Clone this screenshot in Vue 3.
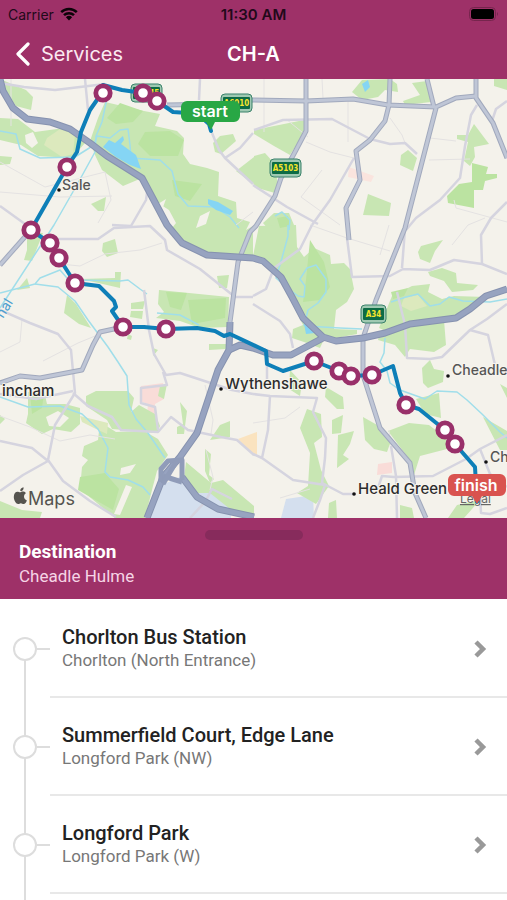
<template>
  <div class="app">
    <header class="top">
      <div class="status">
        <div class="carrier">
          <span>Carrier</span>
          <svg class="wifi" viewBox="0 0 18 14" aria-hidden="true">
            <path d="M1.2 5.2a11.2 11.2 0 0 1 15.6 0M4 8.2a7.2 7.2 0 0 1 10 0" fill="none" stroke="#0c0308" stroke-width="2.5" />
            <path d="M5.900 10.300a4.500 4.500 0 0 1 6.200 0L9 13.500z" fill="#0c0308" />
          </svg>
        </div>
        <span class="time">11:30 AM</span>
        <svg class="battery" viewBox="0 0 30 14" aria-hidden="true">
          <rect x=".5" y=".5" width="26" height="13" rx="4" fill="none" stroke="#76254d" />
          <rect x="2" y="2" width="23" height="10" rx="2.500" fill="#000" />
          <path d="M28 5v4q2-2 0-4" fill="#76254d" />
        </svg>
      </div>
      <nav class="nav">
        <button class="back" type="button">
          <svg viewBox="0 0 14 24" aria-hidden="true">
            <path d="M12 2 2 12l10 10" fill="none" stroke="#fff" stroke-width="3.200" stroke-linecap="round" stroke-linejoin="round" />
          </svg>
          <span>Services</span>
        </button>
        <h1>CH-A</h1>
      </nav>
    </header>

    <svg class="map" viewBox="0 79 507 439" role="img" aria-label="Route map">
      <rect y="79" width="507" height="439" fill="#f4f2eb" />

      <!-- airport and built-up areas -->
      <path d="M157 487 182 476 198 492 214 490 231 498 231 518H150z" fill="#d4dfee" />
      <path d="M286 499 313 495 314 518H281z" fill="#d4dfee" />
      <path d="M141 386 163 383 164 399 155 404 155 417 147 415 148 404 140 401z" fill="#f9dcd8" />
      <path d="M349 167 374 176 371 182 348 177z" fill="#fae4de" />
      <path d="M378 464 392 462 392 473 377 475z" fill="#f9dcd8" />
      <path d="M238 439 257 432 257 456 249 451z" fill="#fae3bf" />

      <path v-for="(d, i) in parks" :key="'p' + i" :d="d" fill="#c8e6b3" />
      <path v-for="(d, i) in woods" :key="'w' + i" :d="d" fill="#bbe3a1" />
      <path d="M47 138 60 129 75 135 73 154 62 157 44 145z" fill="#dce9bd" />
      <path d="M80 416 108 423 107 434 96 429 82 422z" fill="#dce9bd" />
      <path d="M404 298 418 295 427 306 411 311 401 306z" fill="#dce9bd" />
      <path v-for="(d, i) in clearings" :key="'c' + i" :d="d" fill="#f4f2eb" />

      <g fill="none" stroke="#a0deea" stroke-width="1.500" stroke-linejoin="round">
        <path v-for="(d, i) in rivers" :key="'r' + i" :d="d" />
      </g>
      <path d="M103 147 109 140 115 143 123 136 124 140 121 144 136 155 141 169 130 165 116 157z" fill="#85d5f4" />
      <path d="M208 199 218 202 233 211 230 215 216 210 208 204z" fill="#85d5f4" />
      <path d="M362 84 368 80 370 87 365 92z" fill="#85d5f4" />
      <path d="M304 324 312 326 315 333 306 334z" fill="#85d5f4" />

      <g fill="none" stroke="#e4e2e2" stroke-width="1">
        <path v-for="(d, i) in lanes" :key="'l' + i" :d="d" />
      </g>
      <g fill="none" stroke="#d5d4df" stroke-width="2.500" stroke-linejoin="round">
        <path v-for="(d, i) in minorRoads" :key="'m' + i" :d="d" />
      </g>
      <g fill="none" stroke="#a1a9bd" stroke-width="5" stroke-linejoin="round">
        <path v-for="(d, i) in mainRoads" :key="'a' + i" :d="d" />
      </g>
      <g fill="none" stroke="#bfc6d6" stroke-width="3" stroke-linejoin="round">
        <path v-for="(d, i) in mainRoads" :key="'b' + i" :d="d" />
      </g>
      <g fill="none" stroke="#8692af" stroke-width="7" stroke-linejoin="round">
        <path v-for="(d, i) in motorways" :key="'x' + i" :d="d" />
      </g>
      <g fill="none" stroke="#97a3c0" stroke-width="5" stroke-linejoin="round">
        <path v-for="(d, i) in motorways" :key="'y' + i" :d="d" />
      </g>
      <g fill="none" stroke="#909cb9" stroke-width="5" stroke-linejoin="round">
        <path v-for="(d, i) in slipRoads" :key="'z' + i" :d="d" />
      </g>

      <g v-for="s in shields" :key="s.x">
        <rect :x="s.x" :y="s.y" :width="s.w" height="18" rx="4" fill="#9fc9b2" stroke="#39816a" />
        <rect :x="s.x + 2" :y="s.y + 3" :width="s.w - 4" height="12" rx="1" fill="#0d6b45" />
        <text class="shield" :x="s.x + s.w / 2" :y="s.y + 12">{{ s.name }}</text>
      </g>

      <g v-for="p in places" :key="p.name">
        <circle v-if="p.dot" :cx="p.dot[0]" :cy="p.dot[1]" r="1.800" fill="#111" />
        <text :class="['place', { minor: p.minor }]" :x="p.x" :y="p.y">{{ p.name }}</text>
      </g>
      <text class="canal" x="0" y="0" transform="translate(3 319) rotate(-58)">nal</text>

      <!-- map attribution -->
      <path d="M22.500 490.500c1-1 1.200-2 1-3.200-1.800.2-3.500 1.800-3.200 3.700.8 0 1.600 0 2.200-.5M24 496.500c0-1.700.9-2.600 1.900-3.300-1.200-1.700-3.500-1.900-4.900-1.200-.8.4-1.300.4-2.200 0-2.300-1-5 .6-5 5 0 3.500 2.400 7 4.300 7 1.300 0 1.500-.8 2.700-.8s1.700.8 2.900.8c1.300 0 2.600-1.700 3.200-3.500-1.700-.7-2.900-2-2.900-4" fill="#55544f" />
      <text class="maps" x="28" y="505">Maps</text>
      <a href="#legal"><text class="legal" x="460" y="503">Legal</text></a>

      <path :d="route" fill="none" stroke="#0e7fb8" stroke-width="4" stroke-linejoin="round" stroke-linecap="round" />
      <circle v-for="([x, y], i) in markers" :key="'s' + i" :cx="x" :cy="y" r="7.200" fill="#fff" stroke="#99306a" stroke-width="4.800" />

      <path d="M187 101h47a6 6 0 0 1 6 6v9a6 6 0 0 1-6 6h-19l-4 8-5-8h-19a6 6 0 0 1-6-6v-9a6 6 0 0 1 6-6" fill="#28a745" />
      <text class="flag" x="210" y="117">start</text>
      <path d="M454 474h46a6 6 0 0 1 6 6v10a6 6 0 0 1-6 6h-18l-5 8-5-8h-18a6 6 0 0 1-6-6v-10a6 6 0 0 1 6-6" fill="#d9534f" />
      <text class="flag" x="476" y="491">finish</text>
    </svg>

    <section class="sheet">
      <div class="sheet-head">
        <div class="grip"></div>
        <h2>Destination</h2>
        <p>Cheadle Hulme</p>
      </div>
      <ol class="stops">
        <li v-for="stop in stops" :key="stop.name">
          <div class="rail"><i class="dot"></i></div>
          <a class="stop" href="#stop">
            <span class="label">
              <strong>{{ stop.name }}</strong>
              <small>{{ stop.place }}</small>
            </span>
            <svg class="chevron" viewBox="0 0 14 20" aria-hidden="true">
              <path d="M3 3 10 10 3 17" fill="none" stroke="#999" stroke-width="4.500" />
            </svg>
          </a>
        </li>
      </ol>
      <div class="more"></div>
    </section>
  </div>
</template>

<script setup>
const stops = [
  { name: 'Chorlton Bus Station', place: 'Chorlton (North Entrance)' },
  { name: 'Summerfield Court, Edge Lane', place: 'Longford Park (NW)' },
  { name: 'Longford Park', place: 'Longford Park (W)' }
]

const markers = [
  [157, 101], [143, 93], [103, 93], [67, 167], [31, 230], [50, 243], [59, 258], [75, 283],
  [123, 327], [166, 329], [314, 361], [339, 371], [351, 376], [372, 375], [406, 405], [445, 430], [455, 444]
]

const route =
  'M211 131 209 124 200 116 188 113 173 112 157 101 143 93 122 90 103 85 99 97 90 110 81 132 77 152 67 167 31 230 50 243 59 258 75 283 99 286 114 301 116 307 112 311 123 327 144 327 166 329 197 328 215 331 224 336 230 334 266 351 267 364 283 371 314 361 339 371 351 376 372 375 393 366 400 393 406 405 419 409 445 430 455 444 475 467 477 502'

const shields = [
  { name: 'A5145', x: 131, y: 84, w: 31 },
  { name: 'A6010', x: 221, y: 94, w: 31 },
  { name: 'A5103', x: 270, y: 159, w: 31 },
  { name: 'A34', x: 361, y: 305, w: 25 }
]

const places = [
  { name: 'Sale', x: 62, y: 190, dot: [59, 190], minor: true },
  { name: 'Wythenshawe', x: 225, y: 389, dot: [221, 389] },
  { name: 'Heald Green', x: 358, y: 494, dot: [354, 494] },
  { name: 'Cheadle', x: 452, y: 375, dot: [448, 376], minor: true },
  { name: 'Ch', x: 490, y: 462, dot: [486, 462], minor: true },
  { name: 'incham', x: 2, y: 396 }
]

const motorways = [
  'M0 79 3 91 13 108 27 119 50 122 70 129 90 143 107 156 123 166 142 178 150 193 167 225 182 243 207 255 253 258 263 261 281 277 292 297 303 318 323 337 336 341 363 338 385 333 410 324 456 318 470 309 486 296 507 289',
  'M230 322 229 350 218 370 207 403 197 433 180 457 163 477 147 518',
  'M229 350 240 345 253 348 273 355 291 355 323 338',
  'M182 477 197 497 218 509 254 517'
]

const slipRoads = [
  'M161 482 161 469 168 461 182 460 182 480',
  'M163 476 182 482',
  'M176 462 163 484'
]

const mainRoads = [
  'M306 79 306 131 296 150 281 178 275 196 256 226 250 232 238 262 230 322',
  'M167 105 220 104 253 100 306 101 353 99 388 105 436 107 456 98 476 96',
  'M390 79 389 105 385 121 370 140 356 151 360 180 346 208 349 240',
  'M427 79 434 107',
  'M436 108 405 228 376 300 363 338 363 375 380 428 410 463 415 493 426 518',
  'M476 79 476 98 493 123 507 158',
  'M0 265 31 230',
  'M123 327 100 332 93 345 82 370 40 378 20 376 0 383'
]

const minorRoads = [
  'M0 83 24 87 55 90 105 84 M85 79 88 110 103 93',
  'M200 79 199 100 M212 133 219 150 225 158 253 184 M225 158 240 148 253 133',
  'M0 206 25 224 M112 225 131 226 146 200 148 186',
  'M50 239 98 239 114 228 150 226 165 240 167 250 200 269 235 297 253 297',
  'M0 310 30 323 58 334 71 350 75 393 55 425 48 460 63 481 90 501 116 517',
  'M0 441 32 448 48 461 23 475 0 491 M73 393 88 406 112 417 121 430 158 432 171 417 188 430 221 437 237 440 254 455',
  'M144 290 149 330 154 354 166 375 180 373 232 390 253 394',
  'M163 372 167 385 141 388 141 403 155 407 158 430',
  'M254 130 283 120 332 119 370 139 390 144 405 143 417 154 M354 158 330 200 312 225',
  'M253 185 287 207 318 224 M312 225 300 249 274 268 266 289 253 296 M253 304 280 321 290 334 293 348',
  'M507 101 496 109 492 121 M477 105 471 115 465 146 460 178 440 200 416 218 406 230',
  'M507 202 491 218 481 235 482 264 M397 292 405 325 407 358 430 359 442 357 470 330 487 319 507 304',
  'M347 238 352 277 390 276 403 269 430 270 454 260 482 264 507 274 M405 229 402 268',
  'M470 330 488 335 495 365 M253 394 270 396 317 398 313 412 326 438 325 458 322 483 343 494 356 494',
  'M270 396 268 430 262 458 293 480 325 485 320 500 313 518 M253 454 262 458',
  'M377 491 382 476 394 477 433 476 466 459 480 449 507 435 M391 446 396 476 397 518 M480 449 490 474 507 487',
  'M190 518 205 502 212 489 232 499 M0 394 36 399 73 391 M480 490 481 513 490 514 507 508 M267 353 267 385'
]

const lanes = [
  'M11 79 11 126 M0 162 45 187 105 172 111 200 98 223 M0 192 60 197 112 196',
  'M264 79 264 132 M322 79 323 98 M348 99 348 142 M286 119 308 137 M306 142 330 152 354 158 M301 197 322 170 M301 197 340 225',
  'M429 160 470 159 M430 138 456 141 M390 118 402 135 405 143 M454 200 456 208 507 222',
  'M60 264 80 266 105 254 140 250 162 243 M0 352 20 342 22 319 M43 361 78 343 95 336',
  'M0 416 30 427 60 441 90 435 115 439 M205 385 213 420 211 434 M206 450 213 477 210 490',
  'M310 225 347 238 390 251 M380 255 389 225 M452 245 468 225 485 218',
  'M253 423 285 418 300 407 M389 430 391 446 M280 498 310 489 M236 225 253 212'
]

const rivers = [
  'M0 131 16 134 20 149 40 158 75 157 94 145 97 136 110 138 120 130 128 129 130 145 131 158 160 160 172 171 178 194 188 206 215 207 230 217 239 228',
  'M107 98 102 122 96 136 95 152 78 183 54 225 0 308',
  'M0 293 35 284 40 278 60 270 67 278',
  'M35 284 58 287 75 301 88 320 108 347 118 362 127 376 129 405 136 419 148 433 165 458',
  'M75 280 120 281 128 280 140 289 147 294 M157 313 180 315 199 325',
  'M0 397 28 407 60 406 82 414 98 429 108 448 105 472 110 477 128 480 143 487 150 495',
  'M288 225 288 236 282 258 276 278 285 286 298 296 304 297 305 286 300 279 307 268 316 265 326 279 326 292 318 303 308 310 304 326',
  'M305 326 340 328 362 329 M391 302 406 297 418 294 430 306 440 304 449 297 463 301 490 302 507 299',
  'M385 338 384 353 380 362 387 371 390 383 400 390 425 399 437 391 457 392 467 400 482 414 500 432 507 438',
  'M275 216 282 212 290 220 289 230'
]

const parks = [
  'M0 79 26 90 33 97 31 110 16 106 7 92 0 91z',
  'M0 118 18 119 35 132 64 128 85 143 72 158 38 156 21 145 0 140z',
  'M105 102 144 111 160 114 155 126 177 131 184 138 183 154 190 164 207 168 219 172 218 196 236 202 237 218 250 222 246 230 253 226 253 259 206 254 185 243 172 228 176 223 169 210 155 201 142 178 123 186 102 170 95 155 90 141 98 118z',
  'M0 156 12 157 10 164 0 165z',
  'M213 143 220 136 233 134 236 141 221 154 215 152z',
  'M236 171 254 157 254 184 244 177z',
  'M91 204 106 197 104 211 98 211z',
  'M103 243 115 239 118 253 107 257 102 251z',
  'M27 232 43 233 32 261 24 260 27 250z',
  'M27 278 30 288 17 290z',
  'M67 295 76 304 91 328 79 324 64 313z',
  'M81 279 115 278 115 272 121 272 120 288z',
  'M131 303 145 301 143 309 131 309z M131 311 143 311 142 319 130 317z M128 334 132 336 131 340 127 339z',
  'M159 290 229 297 228 327 200 328 180 321 156 318 164 312 158 304z',
  'M209 344 226 344 226 349 209 350z M217 276 229 275 227 288 219 288z M153 348 158 350 153 356z',
  'M254 130 304 120 306 130 290 155 274 146 254 134z',
  'M254 156 265 153 273 162 278 183 275 193 254 187z',
  'M274 213 289 213 294 225 289 230 268 229 263 223z',
  'M352 92 362 80 390 79 397 84 398 92 385 90 378 97 362 100z',
  'M412 83 427 81 431 102 405 105 403 101 420 95z',
  'M494 79 507 79 507 90 494 86z',
  'M457 135 468 135 474 124 489 144 474 147 475 157 470 166 464 161 468 142 457 139z',
  'M401 155 408 150 417 158 413 171 400 165z',
  'M368 194 391 203 389 216 363 215z',
  'M259 226 296 225 297 247 304 257 314 248 330 255 331 264 344 263 350 269 354 289 347 302 336 310 334 329 357 330 357 334 336 338 325 337 320 348 304 342 292 338 293 329 303 325 281 281 267 267 253 256z',
  'M421 246 443 240 435 251 430 263 420 259 418 252z',
  'M428 272 442 268 456 273 457 283 478 285 473 290 452 292 444 281 430 276z',
  'M392 296 412 286 430 284 428 292 442 299 454 296 486 297 464 311 448 318 410 324 388 332 379 328z',
  'M380 333 406 327 444 320 446 345 434 352 410 349 405 357 395 345 378 340z',
  'M422 368 430 360 434 369 444 371 443 382 428 388 423 383z',
  'M86 396 96 391 128 391 134 398 131 412 139 405 155 414 160 426 157 433 136 431 112 429 107 420 86 406z',
  'M28 392 44 391 47 404 65 404 80 408 80 424 71 432 53 429 42 434 26 423 28 414z',
  'M100 422 116 432 144 431 158 439 168 455 157 471 153 486 145 518 115 518 80 489 82 467 88 460 82 456 84 446 98 440z',
  'M180 402 187 411 184 434 177 434 177 427 183 424z',
  'M220 425 230 421 230 437 210 440z M160 386 167 384 164 399 158 396z',
  'M186 462 211 483 223 480 254 506 254 515 230 509 210 493 197 493 184 478z',
  'M205 449 211 454 209 475 214 479 210 483 205 471z',
  'M0 501 22 510 42 512 40 518H0z M0 415 5 419 0 424z',
  'M326 387 343 397 344 409 337 409 325 397z M290 370 302 383 300 396 289 389z',
  'M307 409 321 414 322 437 314 443 321 470 329 486 316 504 297 493 308 486 310 453 300 428z',
  'M332 420 343 415 341 433 332 434z M338 435 354 431 350 444 343 455 349 459 337 468z',
  'M363 417 379 426 391 441 387 452 374 449 365 440z',
  'M388 431 409 423 429 425 446 438 447 449 420 456 414 475 409 459z',
  'M416 399 439 393 441 418 425 414z',
  'M483 417 507 431 507 450 500 450z M500 384 507 388 507 398z',
  'M329 503 336 500 337 518 328 518z M457 505 480 500 464 518 448 518z M400 505 412 508 414 518 400 518z'
]

const woods = [
  'M120 103 143 111 133 122 116 124 107 118z',
  'M145 132 170 131 184 140 178 156 150 156 138 144z',
  'M172 180 202 184 190 201 175 196z',
  'M166 292 187 293 181 310 170 307z M188 300 226 298 225 318 192 324z',
  'M472 163 488 167 486 174 497 174 497 178 485 181 483 190 474 190 474 208 448 203 447 196 459 184 472 182z',
  'M277 218 288 216 290 226 280 228z',
  'M80 477 105 473 119 489 113 510 78 490z',
  'M30 393 44 393 42 408 32 414z M391 292 408 288 404 296 393 299z',
  'M310 240 324 262 330 287 320 300 303 302 306 280z'
]

const clearings = [
  'M25 135 33 132 38 143 32 148 26 143z',
  'M46 417 58 411 69 418 60 427 49 426z',
  'M121 468 136 464 130 473 120 475z M126 485 132 487 120 515 114 514z',
  'M186 138 202 140 190 150z M158 204 166 199 162 210z M200 216 210 211 206 224 196 228z'
]
</script>

<style>
body {
  background: #fff;
}
</style>

<style scoped>
.app {
  display: flex;
  flex-direction: column;
  height: 100vh;
  overflow: hidden;
  font-family: Roboto, sans-serif;
}

.top {
  flex: none;
  background: #9e3168;
  color: #fff;
  font-family: Inter, sans-serif;
}

.status {
  display: grid;
  grid-template-columns: 1fr auto 1fr;
  align-items: center;
  height: 28px;
  padding: 0 8px;
  color: #22091a;
  font-size: 14px;
}

.carrier {
  display: flex;
  align-items: center;
  gap: 6px;
}

.wifi {
  width: 18px;
  height: 14px;
}

.time {
  font-size: 15px;
  font-weight: 600;
}

.battery {
  justify-self: end;
  width: 30px;
  height: 14px;
}

.nav {
  display: grid;
  grid-template-columns: 1fr auto 1fr;
  align-items: center;
  height: 51px;
  padding: 0 16px;
}

.back {
  display: flex;
  align-items: center;
  gap: 11px;
  padding: 0;
  border: 0;
  background: none;
  color: #fbe9f2;
  font: inherit;
  font-size: 20px;
}

.back svg {
  width: 14px;
  height: 24px;
}

.nav h1 {
  margin: 0;
  font-size: 20px;
  font-weight: 600;
}

.map {
  display: block;
  flex: none;
  width: 100%;
  font-family: Inter, sans-serif;
}

.shield {
  fill: #f5e52d;
  font: bold 8px "Liberation Sans Narrow", "DejaVu Sans Condensed", sans-serif;
  text-anchor: middle;
}

.place {
  fill: #2c2c2c;
  font-size: 15px;
  font-weight: 500;
  paint-order: stroke;
  stroke: #f7f5ef;
  stroke-width: 2px;
}

.place.minor {
  fill: #555;
  font-size: 14px;
}

.canal {
  fill: #4b9fd0;
  font-size: 14px;
}

.maps {
  fill: #55544f;
  font-size: 18px;
}

.legal {
  fill: #666;
  font-size: 12px;
  text-decoration: underline;
}

.flag {
  fill: #fff;
  font-size: 16px;
  font-weight: 600;
  text-anchor: middle;
}

.sheet {
  display: flex;
  flex: 1;
  flex-direction: column;
  min-height: 0;
}

.sheet-head {
  flex: none;
  height: 65px;
  padding: 12px 19px 4px;
  background: #9e3168;
  color: #fff;
}

.grip {
  width: 98px;
  height: 10px;
  margin: 0 auto;
  border-radius: 5px;
  background: #872b5c;
}

.sheet-head h2 {
  margin: 0;
  font-size: 19px;
  font-weight: 700;
  line-height: 24px;
}

.sheet-head p {
  margin: 0;
  color: #f6d5e6;
  font-size: 17px;
  line-height: 24px;
}

.stops {
  flex: none;
  margin: 0;
  padding: 1px 0 0;
  list-style: none;
}

.stops li {
  display: flex;
  height: 98px;
}

.rail {
  display: flex;
  align-items: center;
  width: 50px;
  background: linear-gradient(#ddd, #ddd) 24px 0 / 2px 100% no-repeat;
}

.stops li:first-child .rail {
  background-position: 24px 50px;
}

.dot {
  box-sizing: border-box;
  width: 24px;
  height: 24px;
  margin-left: 13px;
  border: 2px solid #ddd;
  border-radius: 50%;
  background: #fff;
}

.rail::after {
  flex: 1;
  height: 2px;
  background: #ddd;
  content: "";
}

.stop {
  display: flex;
  flex: 1;
  align-items: center;
  justify-content: space-between;
  padding: 2px 20px 0 12px;
  border-bottom: 2px solid #e8e8e8;
  color: inherit;
  text-decoration: none;
}

.label {
  display: flex;
  flex-direction: column;
  padding-bottom: 2px;
}

.label strong {
  color: #222;
  font-size: 20px;
  font-weight: 500;
  line-height: 24px;
}

.label small {
  color: #777;
  font-size: 17px;
  line-height: 22px;
}

.chevron {
  width: 14px;
  height: 20px;
}

.more {
  flex: 1;
  background: linear-gradient(#ddd, #ddd) 24px 0 / 2px 100% no-repeat;
}
</style>
